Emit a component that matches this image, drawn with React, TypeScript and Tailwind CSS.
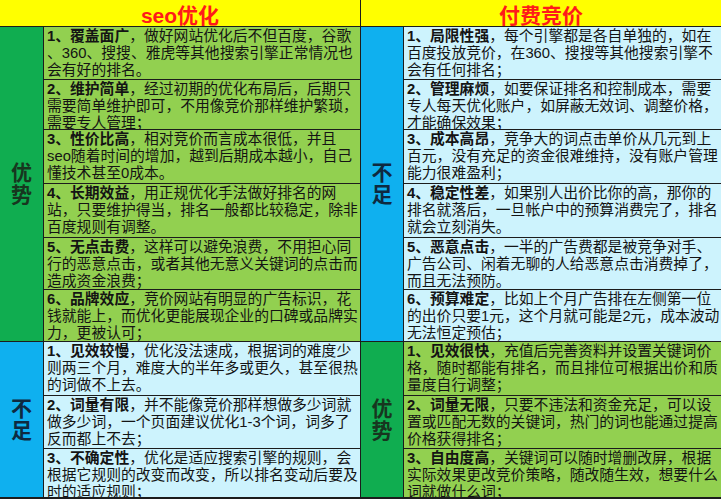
type Row = { h: number; head: string; first: string; lines: string[] };

const GREEN_LABEL = "bg-[#10ad50]";
const GREEN_BODY = "bg-[#92d050]";
const BLUE_LABEL = "bg-[#0fb0ef]";
const BLUE_BODY = "bg-[#cdf3fd]";

// 左列：seo优化
const seoPros: Row[] = [
  { h: 53, head: "1、覆盖面广", first: "，做好网站优化后不但百度，谷歌", lines: ["、360、搜搜、雅虎等其他搜索引擎正常情况也", "会有好的排名。"] },
  { h: 50, head: "2、维护简单", first: "，经过初期的优化布局后，后期只", lines: ["需要简单维护即可，不用像竞价那样维护繁琐，", "需要专人管理；"] },
  { h: 54, head: "3、性价比高", first: "，相对竞价而言成本很低，并且", lines: ["seo随着时间的增加，越到后期成本越小，自己", "懂技术甚至0成本。"] },
  { h: 54, head: "4、长期效益", first: "，用正规优化手法做好排名的网", lines: ["站，只要维护得当，排名一般都比较稳定，除非", "百度规则有调整。"] },
  { h: 52, head: "5、无点击费", first: "，这样可以避免浪费，不用担心同", lines: ["行的恶意点击，或者其他无意义关键词的点击而", "造成资金浪费；"] },
  { h: 52, head: "6、品牌效应", first: "，竞价网站有明显的广告标识，花", lines: ["钱就能上，而优化更能展现企业的口碑或品牌实", "力，更被认可；"] },
];

const seoCons: Row[] = [
  { h: 54, head: "1、见效较慢", first: "，优化没法速成，根据词的难度少", lines: ["则两三个月，难度大的半年多或更久，甚至很热", "的词做不上去。"] },
  { h: 53, head: "2、词量有限", first: "，并不能像竞价那样想做多少词就", lines: ["做多少词，一个页面建议优化1-3个词，词多了", "反而都上不去；"] },
  { h: 49, head: "3、不确定性", first: "，优化是适应搜索引擎的规则，会", lines: ["根据它规则的改变而改变，所以排名变动后要及", "时的适应规则；"] },
];

// 右列：付费竞价
const ppcCons: Row[] = [
  { h: 53, head: "1、局限性强", first: "，每个引擎都是各自单独的，如在", lines: ["百度投放竞价，在360、搜搜等其他搜索引擎不", "会有任何排名；"] },
  { h: 50, head: "2、管理麻烦", first: "，如要保证排名和控制成本，需要", lines: ["专人每天优化账户，如屏蔽无效词、调整价格，", "才能确保效果；"] },
  { h: 54, head: "3、成本高昂", first: "，竞争大的词点击单价从几元到上", lines: ["百元，没有充足的资金很难维持，没有账户管理", "能力很难盈利；"] },
  { h: 54, head: "4、稳定性差", first: "，如果别人出价比你的高，那你的", lines: ["排名就落后，一旦帐户中的预算消费完了，排名", "就会立刻消失。"] },
  { h: 52, head: "5、恶意点击", first: "，一半的广告费都是被竞争对手、", lines: ["广告公司、闲着无聊的人给恶意点击消费掉了，", "而且无法预防。"] },
  { h: 52, head: "6、预算难定", first: "，比如上个月广告排在左侧第一位", lines: ["的出价只要1元，这个月就可能是2元，成本波动", "无法恒定预估；"] },
];

const ppcPros: Row[] = [
  { h: 54, head: "1、见效很快", first: "，充值后完善资料并设置关键词价", lines: ["格，随时都能有排名，而且排位可根据出价和质", "量度自行调整；"] },
  { h: 53, head: "2、词量无限", first: "，只要不违法和资金充足，可以设", lines: ["置或匹配无数的关键词，热门的词也能通过提高", "价格获得排名；"] },
  { h: 49, head: "3、自由度高", first: "，关键词可以随时增删改屏，根据", lines: ["实际效果更改竞价策略，随改随生效，想要什么", "词就做什么词；"] },
];

function Section({
  label,
  rows,
  labelBg,
  bodyBg,
  labelText,
  labelW,
}: {
  label: string[];
  rows: Row[];
  labelBg: string;
  bodyBg: string;
  labelText: string;
  labelW: string;
}) {
  return (
    <div className="flex">
      <div
        className={`${labelW} shrink-0 ${labelBg} border-t border-r border-[#1c1c1c] flex flex-col items-center justify-center text-[21px] leading-[22px] font-bold ${labelText}`}
      >
        {label.map((c) => (
          <span key={c}>{c}</span>
        ))}
      </div>
      <div className={`flex-1 ${bodyBg}`}>
        {rows.map((r) => (
          <div
            key={r.head}
            className="border-t border-[#1c1c1c] pl-[3px] pt-[1px] overflow-hidden text-[14.8px] leading-[17px] text-[#141414] whitespace-nowrap"
            style={{ height: r.h }}
          >
            <div>
              <span className="font-bold">{r.head}</span>
              {r.first}
            </div>
            {r.lines.map((l) => (
              <div key={l}>{l}</div>
            ))}
          </div>
        ))}
      </div>
    </div>
  );
}

export default function App() {
  return (
    <div className="w-[721px] h-[500px] overflow-hidden bg-white font-['Liberation_Sans','Noto_Sans_CJK_SC',sans-serif]">
      <div className="flex border-b-2 border-[#1c1c1c]">
        <div className="w-[361px] shrink-0 border-r border-[#1c1c1c]">
          <div className="h-[26px] bg-[#ffff00] flex items-center justify-center pt-[5px] text-[21px] font-bold text-[#ff1a1a]">
            seo优化
          </div>
          <Section
            label={["优", "势"]}
            rows={seoPros}
            labelBg={GREEN_LABEL}
            bodyBg={GREEN_BODY}
            labelText="text-[#17361f]"
            labelW="w-[44px]"
          />
          <Section
            label={["不", "足"]}
            rows={seoCons}
            labelBg={BLUE_LABEL}
            bodyBg={BLUE_BODY}
            labelText="text-[#0e2a40]"
            labelW="w-[44px]"
          />
        </div>
        <div className="flex-1">
          <div className="h-[26px] bg-[#ffff00] flex items-center justify-center pt-[5px] text-[21px] font-bold text-[#ff1a1a]">
            付费竞价
          </div>
          <Section
            label={["不", "足"]}
            rows={ppcCons}
            labelBg={BLUE_LABEL}
            bodyBg={BLUE_BODY}
            labelText="text-[#0e2a40]"
            labelW="w-[43px]"
          />
          <Section
            label={["优", "势"]}
            rows={ppcPros}
            labelBg={GREEN_LABEL}
            bodyBg={GREEN_BODY}
            labelText="text-[#17361f]"
            labelW="w-[43px]"
          />
        </div>
      </div>
    </div>
  );
}
